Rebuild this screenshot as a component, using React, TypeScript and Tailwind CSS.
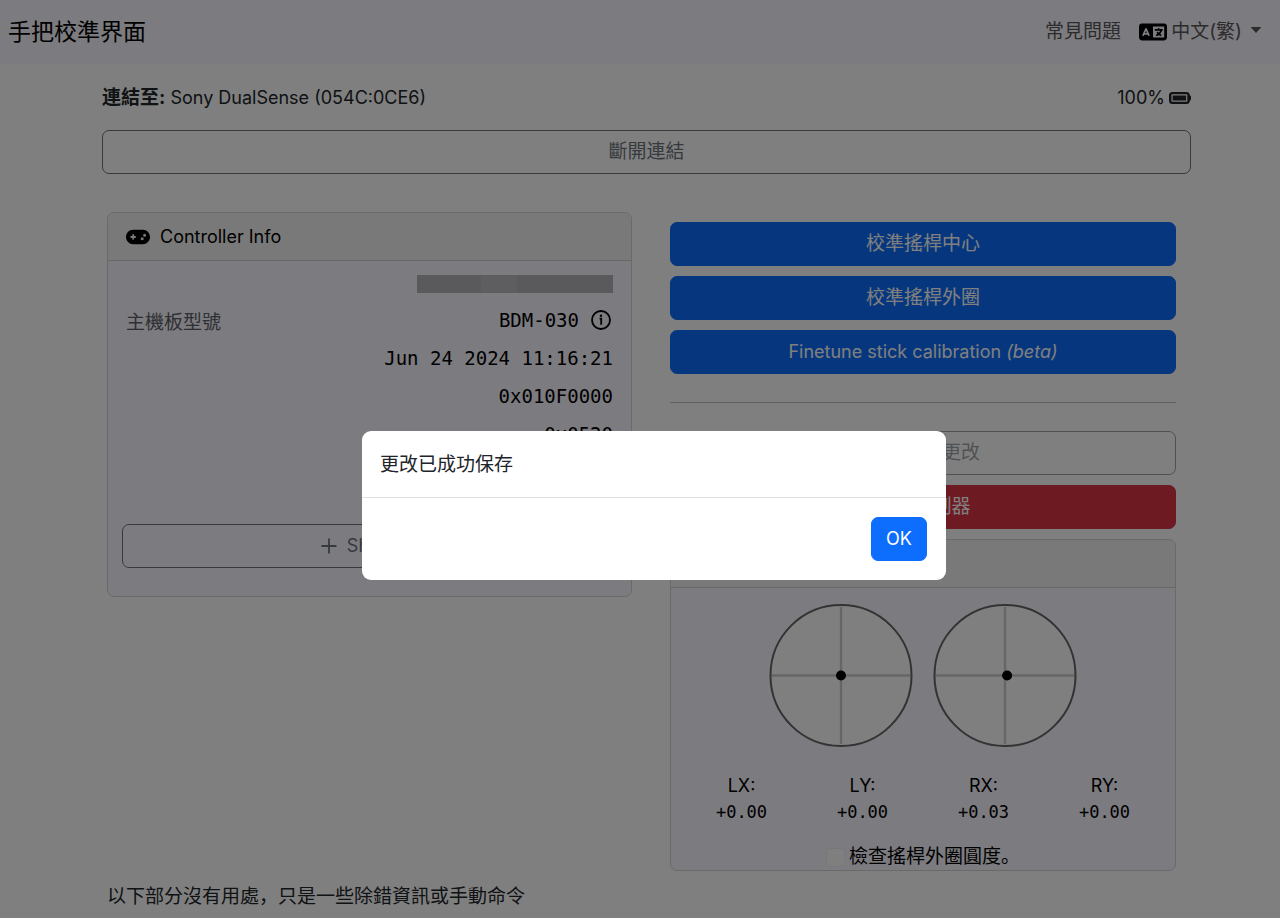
import { useState } from "react";
import type { ReactNode } from "react";
import clsx from "clsx";
import { FaBatteryFull, FaGamepad, FaLanguage } from "react-icons/fa6";

interface InfoRow {
  label?: string;
  value: string;
  hidden?: boolean;
  info?: boolean;
}

const INFO_ROWS: InfoRow[] = [
  { value: "", hidden: true },
  { label: "主機板型號", value: "BDM-030", info: true },
  { value: "Jun 24 2024 11:16:21" },
  { value: "0x010F0000" },
  { value: "0x0520" },
];

const STICKS = [
  { id: "left", x: 0 },
  { id: "right", x: 0.03 },
];

const AXES = [
  { label: "LX:", value: "+0.00" },
  { label: "LY:", value: "+0.00" },
  { label: "RX:", value: "+0.03" },
  { label: "RY:", value: "+0.00" },
];

const BUTTON_VARIANTS = {
  primary: "border-[#0d6efd] bg-[#0d6efd] text-white",
  danger: "border-[#dc3545] bg-[#dc3545] text-white",
  outline: "border-[#6c757d] text-[#6c757d]",
};

interface ButtonProps {
  variant: keyof typeof BUTTON_VARIANTS;
  children: ReactNode;
  className?: string;
  disabled?: boolean;
  onClick?: () => void;
}

function Button({ variant, children, className, disabled, onClick }: ButtonProps) {
  return (
    <button
      type="button"
      disabled={disabled}
      onClick={onClick}
      className={clsx(
        "flex h-11 items-center justify-center rounded-[7px] border whitespace-nowrap",
        BUTTON_VARIANTS[variant],
        disabled && "opacity-65",
        className,
      )}
    >
      {children}
    </button>
  );
}

function Card({ title, children }: { title: string; children: ReactNode }) {
  return (
    <section className="overflow-hidden rounded-[7px] border border-[#d4d4d6] bg-[#f8f6ff]">
      <h2 className="flex h-12 items-center gap-2.5 border-b border-[#cfcfd1] bg-[#f3f3f3] px-[18px] text-black">
        <FaGamepad className="h-5 w-6" />
        {title}
      </h2>
      {children}
    </section>
  );
}

function InfoIcon() {
  return (
    <svg viewBox="0 0 20 20" className="size-5" fill="none" stroke="currentColor" strokeWidth="1.8">
      <circle cx="10" cy="10" r="9" />
      <path d="M8.6 8.6h1.6v6.2" />
      <circle cx="10" cy="5.8" r="1.2" fill="currentColor" stroke="none" />
    </svg>
  );
}

function StickView({ x }: { x: number }) {
  return (
    <svg viewBox="0 0 144 144" className="size-36" aria-hidden="true">
      <circle cx="72" cy="71.5" r="70.5" fill="#fff" stroke="#666" strokeWidth="2" />
      <path d="M72 3v137M3 71.5h138" stroke="#ccc" strokeWidth="2.4" />
      <circle cx={72 + x * 70} cy="71.5" r="5" fill="#000" />
    </svg>
  );
}

export default function App() {
  const [open, setOpen] = useState(true);

  return (
    <div className="min-h-screen bg-white font-['Inter','Noto_Sans_CJK_SC',sans-serif] text-[18px] leading-7 text-[#212529]">
      <nav className="flex h-16 items-center justify-between bg-[#f8f6ff] pr-[18px] pl-2">
        <a href="#" className="text-[23px] text-black">
          手把校準界面
        </a>
        <div className="flex items-center gap-[18px] text-[19px] text-[#595959]">
          <a href="#faq">常見問題</a>
          <button type="button" className="flex items-center gap-1">
            <FaLanguage className="size-7 text-black" />
            中文(繁)
            <svg viewBox="0 0 12 6" className="mb-1 ml-1 h-1.5 w-3" aria-hidden="true">
              <path d="M0.5 0h11L6 6z" fill="currentColor" />
            </svg>
          </button>
        </div>
      </nav>

      <main className="pr-[89px] pl-[102px]">
        <div className="flex items-center justify-between pt-5 pb-[18px]">
          <p>
            <b className="text-[19px]">連結至:</b> Sony DualSense (054C:0CE6)
          </p>
          <p className="flex items-center gap-1">
            100%
            <FaBatteryFull className="size-[22px]" />
          </p>
        </div>
        <Button variant="outline" className="w-full text-[19px]">
          斷開連結
        </Button>

        <div className="mt-[38px] flex items-start gap-[38px] pr-[15px] pl-[5px]">
          <div className="flex-[525]">
            <Card title="Controller Info">
              <dl className="min-h-[263px] px-[18px] pt-0.5">
                {INFO_ROWS.map((row, i) => (
                  <div key={i} className="flex h-[38px] items-center justify-between">
                    <dt className="pt-1.5 text-[19px] text-[#5c6066]">{row.label}</dt>
                    <dd className="flex items-center gap-3 font-['DejaVu_Sans_Mono',monospace] text-[19px] text-black">
                      {row.hidden ? (
                        <span className="mt-1 flex h-[18px] w-[196px] bg-[#b5b4ba]">
                          <span className="ml-16 w-9 bg-[#bcbbc1]" />
                        </span>
                      ) : (
                        row.value
                      )}
                      {row.info && (
                        <button type="button" aria-label="Board details" className="mr-0.5">
                          <InfoIcon />
                        </button>
                      )}
                    </dd>
                  </div>
                ))}
              </dl>
              <div className="px-3.5 pb-7">
                <Button variant="outline" className="w-full gap-2.5">
                  <svg viewBox="0 0 16 16" className="size-4" aria-hidden="true">
                    <path d="M8 0.5v15M0.5 8h15" stroke="currentColor" strokeWidth="1.8" />
                  </svg>
                  Show all
                </Button>
              </div>
            </Card>
          </div>

          <div className="flex flex-[506] flex-col gap-2.5 pt-2.5">
            <Button variant="primary" className="text-[19px]">
              校準搖桿中心
            </Button>
            <Button variant="primary" className="text-[19px]">
              校準搖桿外圈
            </Button>
            <Button variant="primary">
              <span>
                Finetune stick calibration <i>(beta)</i>
              </span>
            </Button>
            <hr className="my-[18px] border-[#c0c0c0]" />
            <Button variant="outline" disabled className="text-[19px]">
              永久保存更改
            </Button>
            <Button variant="danger" className="text-[19px]">
              重啟控制器
            </Button>
            <Card title="Joystick Info">
              <div className="flex justify-center gap-5 pt-4">
                {STICKS.map((s) => (
                  <StickView key={s.id} x={s.x} />
                ))}
              </div>
              <dl className="grid grid-cols-4 px-2.5 pt-6 text-center text-black">
                {AXES.map((axis) => (
                  <div key={axis.label}>
                    <dt>{axis.label}</dt>
                    <dd className="font-['DejaVu_Sans_Mono',monospace] text-[17px] leading-6">
                      {axis.value}
                    </dd>
                  </div>
                ))}
              </dl>
              <label className="flex items-center justify-center gap-1 pt-5 text-[19px] leading-[26px] text-black">
                <input
                  type="checkbox"
                  className="size-[19px] appearance-none rounded-[4px] border border-[#f0eff4] bg-white"
                />
                檢查搖桿外圈圓度。
              </label>
            </Card>
          </div>
        </div>
        <p className="mt-3 pl-[5px] text-[19px]">以下部分沒有用處，只是一些除錯資訊或手動命令</p>
      </main>

      {open && (
        <div className="fixed inset-0 flex items-start justify-center bg-black/50 pt-[431px] pl-7">
          <div role="dialog" aria-modal="true" className="w-full max-w-[584px] rounded-[9px] bg-white">
            <p className="border-b border-[#dee2e6] px-[18px] pt-5 pb-[18px] text-[19px]">
              更改已成功保存
            </p>
            <div className="flex justify-end p-[19px]">
              <Button variant="primary" className="w-14" onClick={() => setOpen(false)}>
                OK
              </Button>
            </div>
          </div>
        </div>
      )}
    </div>
  );
}
